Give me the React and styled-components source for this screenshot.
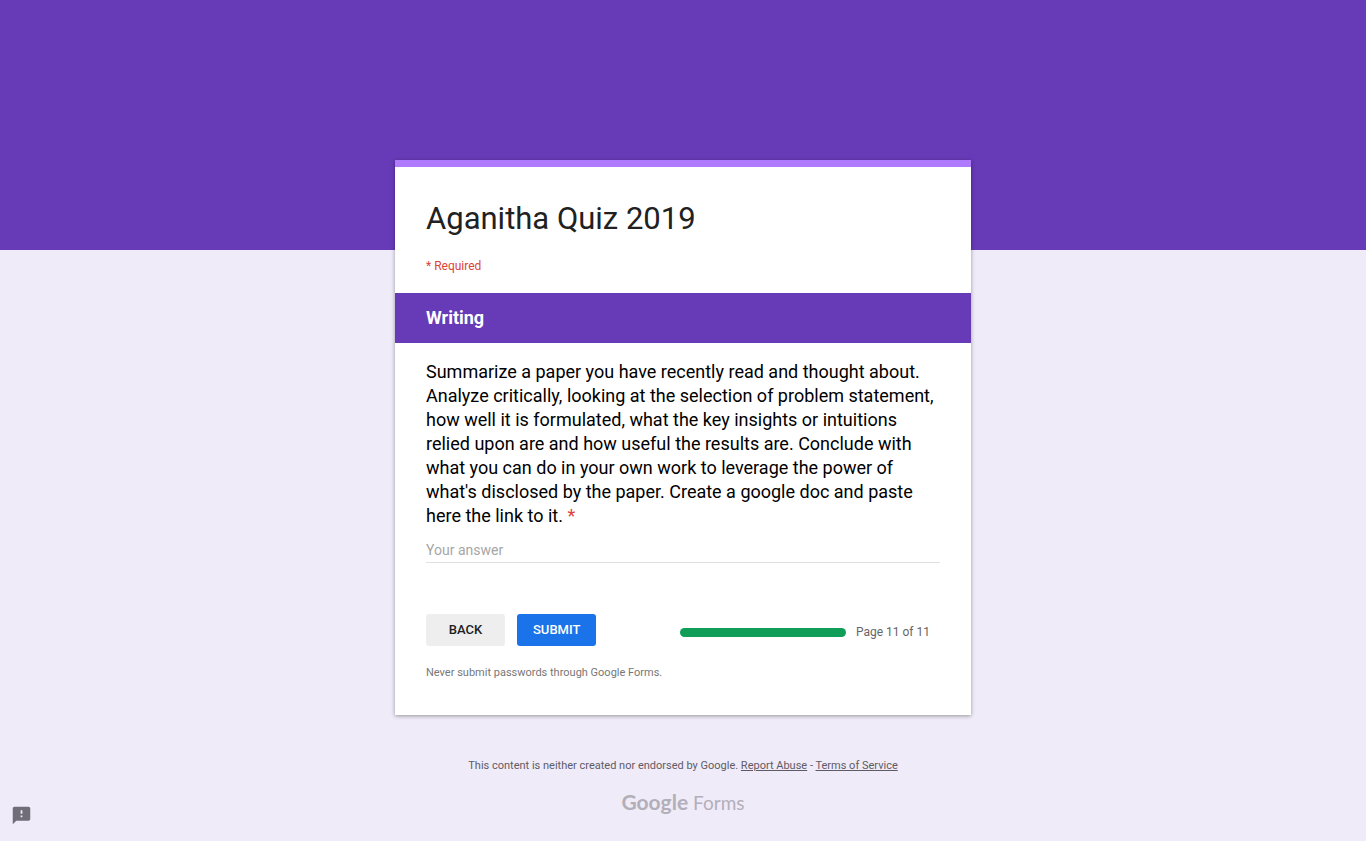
import React from "react";
import styled, { createGlobalStyle } from "styled-components";

const GlobalStyle = createGlobalStyle`
  * { box-sizing: border-box; }
  body {
    margin: 0;
    background: #efebf8;
    color: #212121;
    font-family: Roboto, Arial, sans-serif;
  }
`;

const Banner = styled.div`
  height: 250px;
  background: #673ab7;
`;

const Column = styled.div`
  width: 100%;
  max-width: 576px;
  margin: -90px auto 0;
`;

const Card = styled.main`
  position: relative;
  background: #fff;
  border-top: 7px solid #b07aff;
  box-shadow: 0 1px 4px rgba(0, 0, 0, 0.37);
`;

const Intro = styled.header`
  padding: 31px 31px 18px;
`;

const Title = styled.h1`
  margin: 0;
  font-size: 31px;
  line-height: 42px;
  font-weight: 400;
`;

const RequiredNote = styled.p`
  margin: 17px 0 0;
  color: #db4437;
  font-size: 12px;
  line-height: 18px;
`;

const SectionTitle = styled.h2`
  margin: 0;
  padding: 0 31px;
  background: #673ab7;
  color: #fff;
  font-size: 18px;
  line-height: 50px;
  font-weight: 700;
`;

const Form = styled.form`
  padding: 17px 31px 33px;
`;

const Question = styled.label`
  display: block;
  color: #000;
  font-size: 18px;
  line-height: 24px;
`;

const Asterisk = styled.span`
  color: #db4437;
`;

const Answer = styled.input`
  display: block;
  width: 100%;
  height: 25px;
  margin: 10px 0 51px;
  padding: 0;
  border: 0;
  border-bottom: 1px solid #e0e0e0;
  outline: 0;
  background: transparent;
  color: #212121;
  font: 400 14px/24px Roboto, Arial, sans-serif;

  &::placeholder {
    color: #a6a6a6;
    opacity: 1;
  }
`;

const Actions = styled.div`
  display: flex;
  align-items: center;
  gap: 12px;
`;

const Button = styled.button`
  min-width: 79px;
  height: 32px;
  padding: 0 16px;
  border: 0;
  border-radius: 3px;
  background: ${(p) => (p.$primary ? "#1a73e8" : "#eee")};
  color: ${(p) => (p.$primary ? "#fff" : "#212121")};
  font: 500 13px/32px Roboto, Arial, sans-serif;
  text-transform: uppercase;
  cursor: pointer;
`;

const Progress = styled.div`
  display: flex;
  align-items: center;
  gap: 10px;
  margin: 4px 10px 0 auto;
  color: #666;
  font-size: 12px;
  line-height: 18px;
`;

const Track = styled.div`
  width: 166px;
  height: 9px;
  border-radius: 5px;
  background: #ddd;
  overflow: hidden;
`;

const Fill = styled.div`
  height: 100%;
  background: #0f9d58;
`;

const Warning = styled.p`
  margin: 18px 0 0;
  color: #777;
  font-size: 11px;
  line-height: 18px;
`;

const Footer = styled.footer`
  padding: 42px 0 24px;
  color: #5f5b66;
  font-size: 11px;
  line-height: 18px;
  text-align: center;

  a { color: inherit; }
`;

const Disclaimer = styled.p`
  margin: 0;
`;

const Logo = styled.a`
  display: inline-flex;
  align-items: baseline;
  gap: 5px;
  margin-top: 13px;
  && { color: #b3afba; }
  font-family: Lato, sans-serif;
  font-size: 19px;
  line-height: 28px;
  text-decoration: none;
`;

const Brand = styled.span`
  font-size: 21px;
  font-weight: 700;
`;

const Feedback = styled.button`
  position: fixed;
  left: 11px;
  bottom: 15px;
  width: 21px;
  height: 21px;
  padding: 0;
  border: 0;
  background: transparent;
  cursor: pointer;

  svg { display: block; }
`;

const page = 11;
const pages = 11;

export default function App() {
  return (
    <>
      <GlobalStyle />
      <Banner />
      <Column>
        <Card>
          <Intro>
            <Title>Aganitha Quiz 2019</Title>
            <RequiredNote>* Required</RequiredNote>
          </Intro>
          <SectionTitle>Writing</SectionTitle>
          <Form onSubmit={(e) => e.preventDefault()}>
            <Question htmlFor="answer">
              Summarize a paper you have recently read and thought about. Analyze
              critically, looking at the selection of problem statement, how well it
              is formulated, what the key insights or intuitions relied upon are and
              how useful the results are. Conclude with what you can do in your own
              work to leverage the power of what's disclosed by the paper. Create a
              google doc and paste here the link to it. <Asterisk>*</Asterisk>
            </Question>
            <Answer id="answer" type="text" placeholder="Your answer" required />
            <Actions>
              <Button type="button">Back</Button>
              <Button type="submit" $primary>Submit</Button>
              <Progress>
                <Track>
                  <Fill style={{ width: `${(page / pages) * 100}%` }} />
                </Track>
                <span>Page {page} of {pages}</span>
              </Progress>
            </Actions>
            <Warning>Never submit passwords through Google Forms.</Warning>
          </Form>
        </Card>
        <Footer>
          <Disclaimer>
            This content is neither created nor endorsed by Google.{" "}
            <a href="#report">Report Abuse</a> - <a href="#terms">Terms of Service</a>
          </Disclaimer>
          <Logo href="#forms">
            <Brand>Google</Brand>
            <span>Forms</span>
          </Logo>
        </Footer>
      </Column>
      <Feedback type="button" aria-label="Report a problem">
        <svg width="21" height="21" viewBox="0 0 24 24" fill="#706d78">
          <path d="M20 2H4c-1.100 0-2 .9-2 2v18l4-4h14c1.100 0 2-.9 2-2V4c0-1.100-.9-2-2-2zm-7 12h-2v-2h2v2zm0-4h-2V6h2v4z" />
        </svg>
      </Feedback>
    </>
  );
}
